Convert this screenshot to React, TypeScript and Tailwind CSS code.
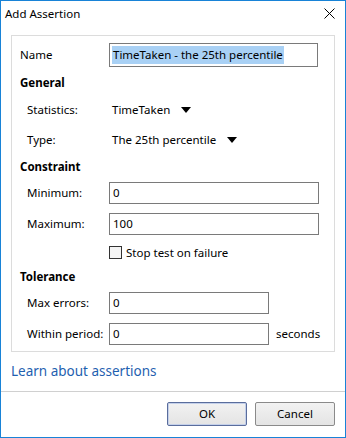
import React from "react";

const font = { fontFamily: '"Noto Sans", "Liberation Sans", sans-serif' };

function Caret() {
  return (
    <svg width="10" height="6" viewBox="0 0 10 6" className="ml-[11px]">
      <path d="M0 0 H10 L5 6 Z" fill="#000" />
    </svg>
  );
}

export default function App() {
  return (
    <div
      className="w-[346px] h-[438px] border border-[#1883d7] bg-white flex flex-col text-[11.5px] text-black leading-none"
      style={font}
    >
      {/* Title bar */}
      <div className="h-[25px] flex items-center justify-between pl-[4px] pr-[10px] shrink-0">
        <span className="text-[11.5px]">Add Assertion</span>
        <svg width="11" height="11" viewBox="0 0 11 11">
          <path d="M0.5 0.5 L10.5 10.5 M10.5 0.5 L0.5 10.5" stroke="#000" strokeWidth="1" />
        </svg>
      </div>

      {/* Body */}
      <div className="px-[10px] mt-[9px]">
        <div className="border border-[#dcdcdc] pt-[7px] pb-[6px] flex flex-col">
          {/* Name */}
          <div className="h-[24px] flex items-center">
            <span className="w-[97px] pl-[8px]">Name</span>
            <div className="w-[209px] h-[24px] border border-[#7a7a7a] flex items-center pl-[2px]">
              <span className="bg-[#a9d1f5] px-[1px] py-[3px]">TimeTaken - the 25th percentile</span>
            </div>
          </div>

          {/* General */}
          <div className="h-[16px] mt-[8px] flex items-center pl-[8px] font-bold">General</div>
          <div className="h-[20px] mt-[9px] flex items-center">
            <span className="w-[97px] pl-[15px]">Statistics:</span>
            <span className="pl-[3px]">TimeTaken</span>
            <Caret />
          </div>
          <div className="h-[20px] mt-[10px] flex items-center">
            <span className="w-[97px] pl-[15px]">Type:</span>
            <span className="pl-[3px]">The 25th percentile</span>
            <Caret />
          </div>

          {/* Constraint */}
          <div className="h-[16px] mt-[9px] flex items-center pl-[8px] font-bold">Constraint</div>
          <div className="h-[22px] mt-[7px] flex items-center">
            <span className="w-[97px] pl-[15px]">Minimum:</span>
            <div className="w-[210px] h-[22px] border border-[#7a7a7a] flex items-center pl-[3px]">0</div>
          </div>
          <div className="h-[22px] mt-[9px] flex items-center">
            <span className="w-[97px] pl-[15px]">Maximum:</span>
            <div className="w-[210px] h-[22px] border border-[#7a7a7a] flex items-center pl-[3px]">100</div>
          </div>
          <div className="h-[13px] mt-[11px] flex items-center">
            <span className="w-[97px]" />
            <div className="w-[13px] h-[13px] border border-[#333] bg-[#f4f4f4]" />
            <span className="ml-[4px]">Stop test on failure</span>
          </div>

          {/* Tolerance */}
          <div className="h-[16px] mt-[10px] flex items-center pl-[8px] font-bold">Tolerance</div>
          <div className="h-[22px] mt-[7px] flex items-center">
            <span className="w-[97px] pl-[15px]">Max errors:</span>
            <div className="w-[160px] h-[22px] border border-[#7a7a7a] flex items-center pl-[3px]">0</div>
          </div>
          <div className="h-[22px] mt-[9px] flex items-center">
            <span className="w-[97px] pl-[15px]">Within period:</span>
            <div className="w-[160px] h-[22px] border border-[#7a7a7a] flex items-center pl-[3px]">0</div>
            <span className="ml-[7px]">seconds</span>
          </div>
        </div>
      </div>

      {/* Link */}
      <div className="h-[39px] flex items-center px-[10px]">
        <span className="text-[13.5px] text-[#1f5fb0]">Learn about assertions</span>
      </div>

      {/* Footer */}
      <div className="border-t border-[#d0d0d0] flex-1 flex justify-end items-start pt-[10px] pr-[10px] gap-[8px]">
        <button
          className="w-[80px] h-[24px] border border-[#5a6d9c] bg-gradient-to-b from-[#f2f2f2] to-[#e4e4e4] shadow-[inset_0_0_0_1px_#c4d0ea] text-[11.5px] rounded-[2px]"
          style={font}
        >
          OK
        </button>
        <button
          className="w-[80px] h-[24px] border border-[#8a8a8a] bg-gradient-to-b from-[#f2f2f2] to-[#e4e4e4] text-[11.5px] rounded-[2px]"
          style={font}
        >
          Cancel
        </button>
      </div>
    </div>
  );
}
